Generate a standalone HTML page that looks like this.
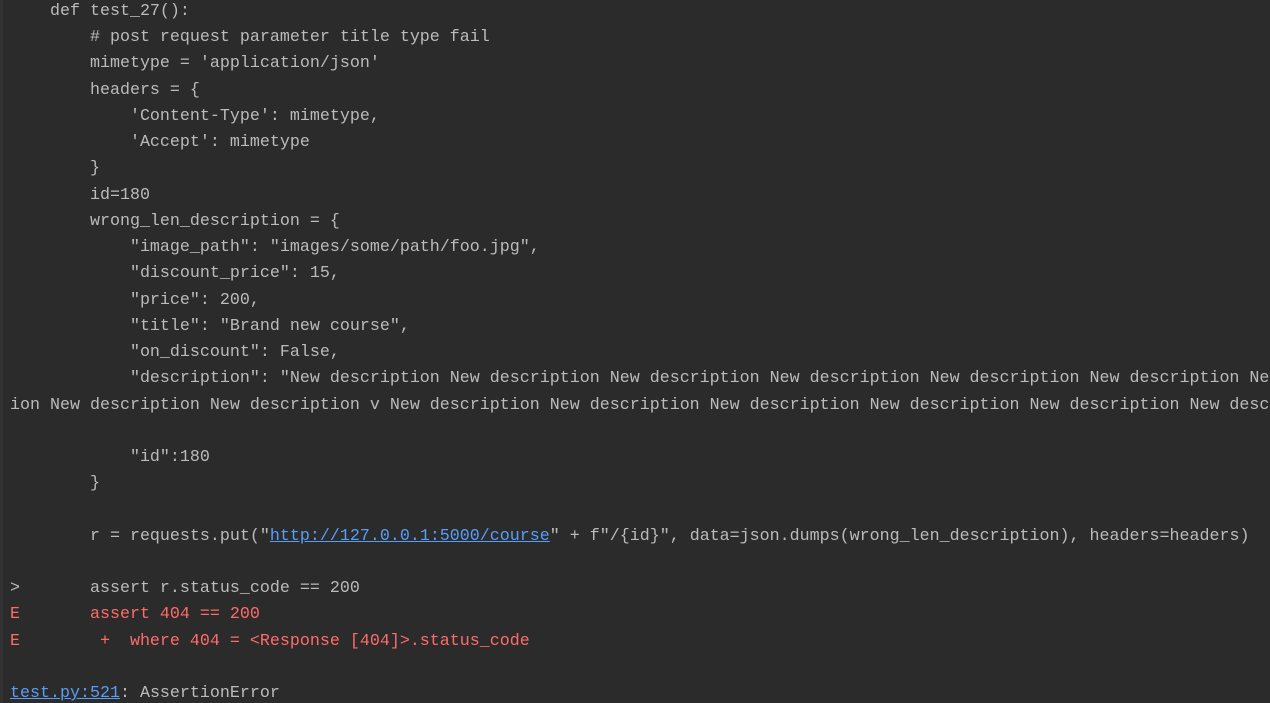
<!DOCTYPE html>
<html><head><meta charset="utf-8"><style>
html,body{margin:0;padding:0;width:1270px;height:703px;overflow:hidden;background:#2b2b2b;}
.wrap{position:absolute;left:0;top:0;width:1270px;height:703px;overflow:hidden;}
.strip{position:absolute;left:0;top:0;width:3px;height:703px;background:#323232;}
pre{position:absolute;left:10px;top:-1px;margin:0;font-family:"Liberation Mono",monospace;font-size:16.67px;line-height:26.23px;color:#bbbbbb;white-space:pre;}
.r{color:#ff6b68}
.l{color:#589df6;text-decoration:underline}
</style></head><body><div class="wrap"><div class="strip"></div>
<pre>    def test_27():
        # post request parameter title type fail
        mimetype = 'application/json'
        headers = {
            'Content-Type': mimetype,
            'Accept': mimetype
        }
        id=180
        wrong_len_description = {
            "image_path": "images/some/path/foo.jpg",
            "discount_price": 15,
            "price": 200,
            "title": "Brand new course",
            "on_discount": False,
            "description": "New description New description New description New description New description New description Ne
ion New description New description v New description New description New description New description New description New desc

            "id":180
        }

        r = requests.put("<span class="l">http://127.0.0.1:5000/course</span>" + f"/{id}", data=json.dumps(wrong_len_description), headers=headers)

&gt;       assert r.status_code == 200
<span class="r">E       assert 404 == 200</span>
<span class="r">E        +  where 404 = &lt;Response [404]&gt;.status_code</span>

<span class="l">test.py:521</span>: AssertionError</pre></div>
</body></html>
